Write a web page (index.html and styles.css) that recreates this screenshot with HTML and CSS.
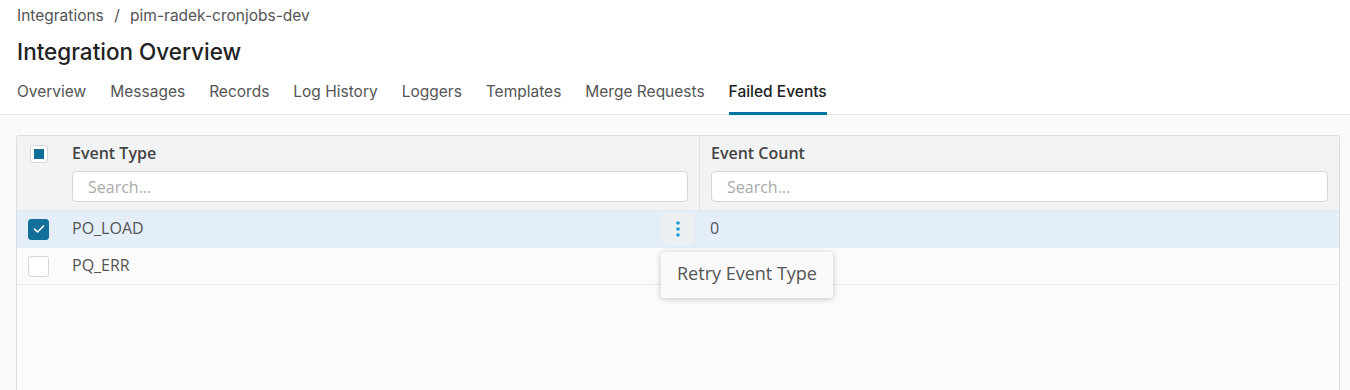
FILE: index.html
```html
<!DOCTYPE html>
<html lang="en">
<head>
    <meta charset="UTF-8">
    <title>Integration Overview</title>
    <link rel="stylesheet" href="styles.css">
</head>
<body>
    <div class="page-head">
        <div class="breadcrumb">
            <span>Integrations</span>
            <span class="sep">/</span>
            <span>pim-radek-cronjobs-dev</span>
        </div>
        <h1>Integration Overview</h1>
        <nav class="tabs">
            <a class="tab">Overview</a>
            <a class="tab">Messages</a>
            <a class="tab">Records</a>
            <a class="tab">Log History</a>
            <a class="tab">Loggers</a>
            <a class="tab">Templates</a>
            <a class="tab">Merge Requests</a>
            <a class="tab active">Failed Events</a>
        </nav>
    </div>

    <div class="content">
        <div class="grid">
            <div class="grid-header">
                <div class="cell-check">
                    <span class="checkbox partial"><span class="fill"></span></span>
                </div>
                <div class="col col-type">
                    <div class="col-title">Event Type</div>
                    <input type="text" class="filter" placeholder="Search...">
                </div>
                <div class="col col-count">
                    <div class="col-title">Event Count</div>
                    <input type="text" class="filter" placeholder="Search...">
                </div>
            </div>

            <div class="row selected">
                <div class="cell-check">
                    <span class="checkbox checked">
                        <svg width="14" height="14" viewBox="0 0 14 14"><path d="M2.5 7.2 L5.6 10 L11.5 4" fill="none" stroke="#fff" stroke-width="1.6" stroke-linecap="round" stroke-linejoin="round"/></svg>
                    </span>
                </div>
                <div class="col col-type">
                    <span class="value">PO_LOAD</span>
                    <span class="kebab">
                        <svg width="6" height="18" viewBox="0 0 6 18"><circle cx="3" cy="3" r="1.8" fill="#1a9bd7"/><circle cx="3" cy="9" r="1.8" fill="#1a9bd7"/><circle cx="3" cy="15" r="1.8" fill="#1a9bd7"/></svg>
                    </span>
                    <div class="menu">Retry Event Type</div>
                </div>
                <div class="col col-count"><span class="value">0</span></div>
            </div>

            <div class="row">
                <div class="cell-check"><span class="checkbox"></span></div>
                <div class="col col-type"><span class="value">PQ_ERR</span></div>
                <div class="col col-count"><span class="value"></span></div>
            </div>
        </div>
    </div>
</body>
</html>
```

FILE: styles.css
```css
body {
    margin: 0;
    background-color: #fff;
    font-family: Inter, "Noto Sans", sans-serif;
    color: #333;
    height: 390px;
    overflow: hidden;
}
.page-head {
    padding: 5px 0 0 17px;
    border-bottom: 1px solid #e6e6e6;
}
.breadcrumb {
    font-size: 15.5px;
    line-height: 21px;
    color: #555;
}
.breadcrumb .sep {
    margin: 0 6px;
}
h1 {
    margin: 12px 0 0;
    font-size: 22.5px;
    font-weight: 500;
    line-height: 28px;
    color: #222;
}
.tabs {
    display: flex;
    gap: 24px;
    margin-top: 16px;
}
.tab {
    font-size: 15.5px;
    line-height: 20px;
    color: #555;
    padding-bottom: 10px;
    border-bottom: 3px solid transparent;
    margin-bottom: -1px;
}
.tab.active {
    color: #222;
    font-weight: 500;
    border-bottom-color: #0077a0;
}
.content {
    background-color: #fafafa;
    padding: 20px 10px 0 16px;
    height: 275px;
    box-sizing: border-box;
    overflow: hidden;
}
.grid {
    border: 1px solid #dcdde0;
    border-bottom: none;
    border-radius: 3px 3px 0 0;
    background-color: #fbfbfc;
    height: 255px;
    font-family: "Open Sans", "Noto Sans", sans-serif;
}
.grid-header {
    display: flex;
    background-color: #f2f3f5;
    height: 74px;
    border-bottom: 1px solid #e4e6ea;
}
.cell-check {
    width: 55px;
    flex: none;
    display: flex;
    box-sizing: border-box;
    padding-left: 11px;
}
.grid-header .cell-check {
    padding-top: 9px;
    padding-left: 13px;
}
.col {
    position: relative;
    box-sizing: border-box;
}
.col-type {
    width: 628px;
    padding-right: 11px;
    border-right: 1px solid #e2e3e6;
}
.col-count {
    flex: 1;
    padding: 0 11px 0 11px;
}
.col-title {
    font-size: 16px;
    font-weight: 600;
    color: #444;
    line-height: 22px;
    padding-top: 6px;
}
.filter {
    display: block;
    width: 100%;
    box-sizing: border-box;
    margin-top: 7px;
    height: 31px;
    border: 1px solid #d6d7da;
    border-radius: 4px;
    background-color: #fff;
    padding: 0 15px;
    font-family: "Open Sans", "Noto Sans", sans-serif;
    font-size: 16px;
    color: #333;
}
.filter::placeholder {
    color: #aaa;
}
.checkbox {
    width: 18px;
    height: 18px;
    box-sizing: border-box;
    border: 1px solid #d4d6da;
    border-radius: 3px;
    background-color: #fff;
    display: flex;
    align-items: center;
    justify-content: center;
}
.checkbox .fill {
    width: 10px;
    height: 10px;
    background-color: #0f6e98;
}
.row {
    display: flex;
    height: 37px;
    align-items: center;
    background-color: #fbfbfb;
    border-bottom: 1px solid #e6e8eb;
    box-sizing: border-box;
}
.row .checkbox {
    width: 21px;
    height: 21px;
}
.row .checkbox.checked {
    background-color: #126f9a;
    border-color: #126f9a;
}
.row.selected {
    background-color: #e3eef8;
    border-bottom-color: #e3eef8;
}
.row .col {
    display: flex;
    align-items: center;
    height: 100%;
    border-right: none;
    padding-bottom: 3px;
}
.row .col-count {
    padding-left: 10px;
}
.value {
    font-size: 16px;
    color: #555;
}
.kebab {
    position: absolute;
    right: 6px;
    top: 2px;
    width: 32px;
    height: 32px;
    background-color: #edf0f3;
    border-radius: 3px;
    display: flex;
    align-items: center;
    justify-content: center;
}
.menu {
    position: absolute;
    right: -133px;
    top: 41px;
    width: 172px;
    height: 46px;
    box-sizing: border-box;
    background-color: #fafafa;
    border-radius: 3px;
    box-shadow: 0 1px 6px rgba(0,0,0,0.22);
    padding: 0 16px 4px;
    display: flex;
    align-items: center;
    font-size: 18px;
    color: #555;
    z-index: 2;
    white-space: nowrap;
}
```
